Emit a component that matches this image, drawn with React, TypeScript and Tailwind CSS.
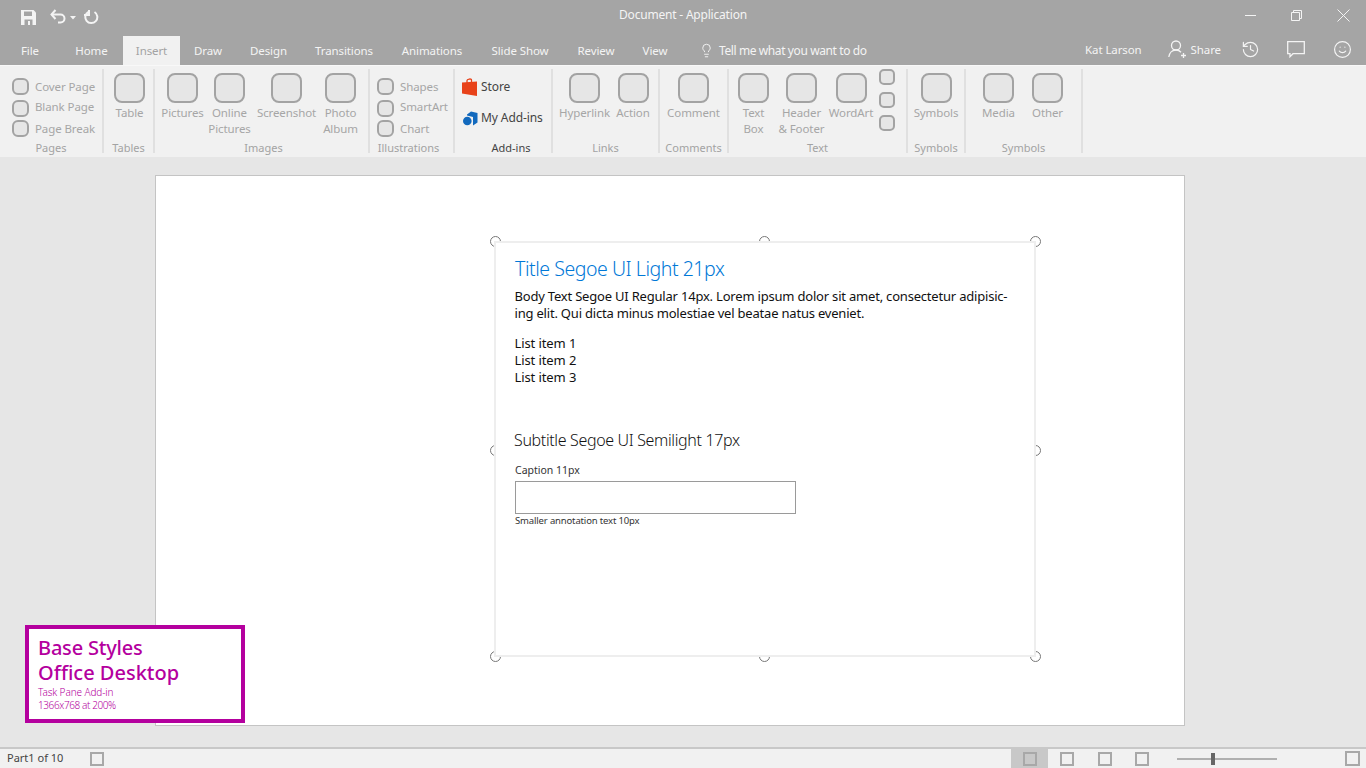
import React from "react";
import { History, Lightbulb, Smile } from "lucide-react";

const font = "font-['Noto_Sans','Open_Sans',sans-serif]";

const tabs = [
    { label: "File", w: "w-[60px]" },
    { label: "Home", w: "w-[63px]" },
    { label: "Insert", w: "w-[57px]", active: true },
    { label: "Draw", w: "w-[56px]" },
    { label: "Design", w: "w-[65px]" },
    { label: "Transitions", w: "w-[86px]" },
    { label: "Animations", w: "w-[90px]" },
    { label: "Slide Show", w: "w-[86px]" },
    { label: "Review", w: "w-[66px]" },
    { label: "View", w: "w-[52px]" },
];

const BigTool = ({ label, second, className }: { label: string; second?: string; className: string }) => (
    <div className={`flex flex-col items-center pt-[4px] shrink-0 ${className}`}>
        <div className="w-[31px] h-[30px] rounded-[8px] border-2 border-[#a3a3a3] bg-[#e6e6e6]" />
        <div className="mt-[2px] text-[11.5px] leading-[16px] tracking-[-0.1px] text-[#a6a6a6] text-center whitespace-nowrap">
            {label}
            {second && <div>{second}</div>}
        </div>
    </div>
);

const SmallTool = ({ label, className, textClass }: { label: string; className?: string; textClass?: string }) => (
    <div className={`flex items-center h-[17px] ${className || ""}`}>
        <div className="w-[17px] h-[17px] rounded-[6px] border-2 border-[#a3a3a3] bg-[#e6e6e6]" />
        <div className={`ml-[6px] text-[11.5px] tracking-[-0.1px] text-[#a6a6a6] whitespace-nowrap ${textClass || ""}`}>
            {label}
        </div>
    </div>
);

const Group = ({
    label,
    className,
    labelClass,
    children,
    dark,
}: {
    label: string;
    className: string;
    labelClass?: string;
    children: React.ReactNode;
    dark?: boolean;
}) => (
    <div className={`relative flex flex-col h-[84px] border-r-2 border-[#e0e0e0] shrink-0 ${className}`}>
        <div className="flex h-[72px] shrink-0">{children}</div>
        <div
            className={`shrink-0 text-center text-[11px] leading-[14px] whitespace-nowrap ${dark ? "text-[#444444]" : "text-[#a3a3a3]"} ${labelClass || ""}`}
        >
            {label}
        </div>
    </div>
);

const Square = ({ className }: { className?: string }) => (
    <div className={`w-[14px] h-[14px] border-2 border-[#a8a8a8] ${className || ""}`} />
);

const Handle = ({ className }: { className: string }) => (
    <div className={`absolute w-[11px] h-[11px] rounded-full border-[1.5px] border-[#777777] bg-white ${className}`} />
);

const App = () => {
    return (
        <div className={`relative w-[1366px] h-[768px] overflow-hidden flex flex-col bg-[#e6e6e6] ${font}`}>
            {/* title bar */}
            <div className="h-[65px] bg-[#a5a5a5] text-[#f4f4f4] shrink-0">
                <div className="relative h-[36px] flex items-center">
                    <svg className="ml-[21px] -mt-[2px]" width="15" height="15" viewBox="0 0 15 15">
                        <path fill="#f4f4f4" d="M0 0h12.5L15 2.5V15H0z" />
                        <path fill="#a5a5a5" d="M3 1.5h8v4.5H3zM3.5 9.5h8V15h-8z" />
                        <path fill="#f4f4f4" d="M7 11h2v4H7z" />
                    </svg>
                    <svg className="ml-[14px] -mt-[2px]" width="16" height="16" viewBox="0 0 16 16" fill="none">
                        <path d="M1.500 5.500h9a4 4 0 0 1 0 8H8" stroke="#f4f4f4" strokeWidth="2" />
                        <path d="M5.500 1 1.500 5.500 5.500 10" stroke="#f4f4f4" strokeWidth="2" />
                    </svg>
                    <svg className="ml-[4px]" width="7" height="4" viewBox="0 0 7 4">
                        <path fill="#f4f4f4" d="M0 0h6L3 3.500z" />
                    </svg>
                    <svg className="ml-[7px] -mt-[2px]" width="15" height="15" viewBox="0 0 15 15" fill="none">
                        <path d="M4.500 1.800A6 6 0 1 0 10.500 2" stroke="#f4f4f4" strokeWidth="2" />
                        <path d="M5 0v5H0" stroke="#f4f4f4" strokeWidth="2" />
                    </svg>
                    <div className="absolute left-0 right-0 top-[6px] text-center text-[12px] leading-[18px] tracking-[-0.2px]">
                        Document - Application
                    </div>
                    <div className="ml-auto flex items-center mb-[5px]">
                        <svg width="11" height="11" viewBox="0 0 11 11" className="mr-[35px]">
                            <path d="M0 5.500h11" stroke="#f4f4f4" strokeWidth="1" />
                        </svg>
                        <svg width="11" height="11" viewBox="0 0 11 11" fill="none" className="mr-[35px]">
                            <path d="M.5 2.500h8v8h-8z" stroke="#f4f4f4" />
                            <path d="M2.500 2V.5h8v8H9" stroke="#f4f4f4" />
                        </svg>
                        <svg width="13" height="13" viewBox="0 0 13 13" className="mr-[16px]">
                            <path d="M.5.5l12 12M12.500.5l-12 12" stroke="#f4f4f4" />
                        </svg>
                    </div>
                </div>
                <div className="h-[29px] flex text-[11.5px] tracking-[-0.1px]">
                    {tabs.map((t) => (
                        <div
                            key={t.label}
                            className={`${t.w} shrink-0 flex items-center justify-center ${t.active ? "bg-[#f1f1f1] text-[#a3a3a3]" : ""}`}
                        >
                            {t.label}
                        </div>
                    ))}
                    <div className="ml-[18px] flex items-center gap-[5px] text-[12px] tracking-[-0.4px]">
                        <Lightbulb size={15} strokeWidth={1.5} />
                        <span>Tell me what you want to do</span>
                    </div>
                    <div className="ml-auto flex items-center pb-[2px]">
                        <span className="text-[11.5px] mr-[26px] tracking-[-0.1px]">Kat Larson</span>
                        <svg width="19" height="19" viewBox="0 0 19 19" fill="none" className="mr-[4px]">
                            <circle cx="8" cy="5.500" r="4.500" stroke="#f4f4f4" strokeWidth="1.300" />
                            <path d="M.8 17c.5-4 3.400-7 7.200-7 2 0 3.700.8 5 2.200" stroke="#f4f4f4" strokeWidth="1.300" />
                            <path d="M15.500 13v5M13 15.500h5" stroke="#f4f4f4" strokeWidth="1.300" />
                        </svg>
                        <span className="text-[11.5px] mr-[20px]">Share</span>
                        <History size={19} strokeWidth={1.5} className="mr-[27px]" />
                        <svg width="18" height="17" viewBox="0 0 18 17" fill="none" className="mr-[28px]">
                            <path d="M.7.7h16.600v12H6l-3 3v-3H.7z" stroke="#f4f4f4" strokeWidth="1.300" />
                        </svg>
                        <Smile size={19} strokeWidth={1.5} className="mr-[14px]" />
                    </div>
                </div>
            </div>

            {/* ribbon */}
            <div className="h-[92px] bg-[#f1f1f1] shrink-0 flex pt-[3px] border-t border-[#f8f8f8]">
                <Group label="Pages" className="w-[104px]">
                    <div className="pl-[12px] pt-[9px] flex flex-col gap-[4px]">
                        <SmallTool label="Cover Page" />
                        <SmallTool label="Blank Page" className="mt-[1px]" textClass="-mt-[3px]" />
                        <SmallTool label="Page Break" className="-mt-[1px]" />
                    </div>
                </Group>
                <Group label="Tables" className="w-[51px]">
                    <BigTool label="Table" className="w-[51px]" />
                </Group>
                <Group label="Images" className="w-[215px]" labelClass="pl-[4px]">
                    <BigTool label="Pictures" className="w-[47px] ml-[4px]" />
                    <BigTool label="Online" second="Pictures" className="w-[47px]" />
                    <BigTool label="Screenshot" className="w-[67px]" />
                    <BigTool label="Photo" second="Album" className="w-[41px]" />
                </Group>
                <Group label="Illustrations" className="w-[85px]" labelClass="pr-[6px]">
                    <div className="pl-[7px] pt-[9px] flex flex-col gap-[4px]">
                        <SmallTool label="Shapes" />
                        <SmallTool label="SmartArt" className="mt-[1px]" textClass="-mt-[3px]" />
                        <SmallTool label="Chart" className="-mt-[1px]" />
                    </div>
                </Group>
                <Group label="Add-ins" className="w-[98px]" labelClass="pl-[16px]" dark>
                    <div className="pl-[7px] pt-[9px] text-[12px] text-[#444444] tracking-[-0.1px]">
                        <div className="flex items-center h-[18px]">
                            <svg width="16" height="18" viewBox="0 0 16 18">
                                <path fill="#e8421a" d="M0 4.500 15 3.500V18L0 15.500z" />
                                <path d="M5 5V2.500C5 1 9.500 .3 9.500 2V5" fill="none" stroke="#e8421a" strokeWidth="1.300" />
                            </svg>
                            <span className="ml-[3px]">Store</span>
                        </div>
                        <div className="flex items-center h-[18px] mt-[13px]">
                            <svg width="15" height="15" viewBox="0 0 15 15" className="ml-[1px]">
                                <path fill="#1269bd" d="M4 3.500 8 0.500 14.500 2V11.500L10 14.500V6L4 4.500z" />
                                <circle cx="4.300" cy="10" r="4.300" fill="#1269bd" />
                            </svg>
                            <span className="ml-[3px]">My Add-ins</span>
                        </div>
                    </div>
                </Group>
                <Group label="Links" className="w-[107px]">
                    <BigTool label="Hyperlink" className="w-[61px] ml-[1px]" />
                    <BigTool label="Action" className="w-[36px]" />
                </Group>
                <Group label="Comments" className="w-[69px]">
                    <BigTool label="Comment" className="w-[67px]" />
                </Group>
                <Group label="Text" className="w-[179px]">
                    <BigTool label="Text" second="Box" className="w-[49px]" />
                    <BigTool label="Header" second="& Footer" className="w-[47px]" />
                    <BigTool label="WordArt" className="w-[50px] ml-[1px]" />
                    <div className="flex flex-col gap-[7px] ml-[3px]">
                        <div className="w-[16px] h-[16px] rounded-[5px] border-2 border-[#a3a3a3] bg-[#e6e6e6]" />
                        <div className="w-[16px] h-[16px] rounded-[5px] border-2 border-[#a3a3a3] bg-[#e6e6e6]" />
                        <div className="w-[16px] h-[16px] rounded-[5px] border-2 border-[#a3a3a3] bg-[#e6e6e6]" />
                    </div>
                </Group>
                <Group label="Symbols" className="w-[58px]">
                    <BigTool label="Symbols" className="w-[56px]" />
                </Group>
                <Group label="Symbols" className="w-[117px]">
                    <BigTool label="Media" className="w-[65px]" />
                    <BigTool label="Other" className="w-[33px]" />
                </Group>
            </div>

            {/* canvas */}
            <div className="flex-1 pt-[18px] pl-[155px]">
                <div className="relative w-[1030px] h-[551px] bg-white border border-[#c4c4c4] pl-[338px] pt-[65px]">
                    <div className="relative w-[542px] h-[416px]">
                        <Handle className="-left-[4px] -top-[5px]" />
                        <Handle className="left-[265px] -top-[5px]" />
                        <Handle className="-right-[5px] -top-[5px]" />
                        <Handle className="-left-[4px] top-[204px]" />
                        <Handle className="-right-[5px] top-[204px]" />
                        <Handle className="-left-[4px] -bottom-[5px]" />
                        <Handle className="left-[265px] -bottom-[5px]" />
                        <Handle className="-right-[5px] -bottom-[5px]" />
                        <div className="relative h-full bg-white border-2 border-[#eeeeee] pl-[19px] pt-[12px] text-[#111111]">
                            <div className="text-[19.5px] leading-[28px] tracking-[-0.45px] font-light text-[#0078d7]">
                                Title Segoe UI Light 21px
                            </div>
                            <div className="mt-[5px] -ml-[0.5px] text-[13px] leading-[17px] tracking-[-0.2px] whitespace-nowrap">
                                Body Text Segoe UI Regular 14px. Lorem ipsum dolor sit amet, consectetur adipisic-
                                <br />
                                ing elit. Qui dicta minus molestiae vel beatae natus eveniet.
                            </div>
                            <div className="mt-[13px] -ml-[0.5px] text-[13px] leading-[17px] tracking-[-0.1px]">
                                <div>List item 1</div>
                                <div>List item 2</div>
                                <div>List item 3</div>
                            </div>
                            <div className="mt-[42px] -ml-[1px] text-[16px] leading-[24px] tracking-[-0.35px] font-light">
                                Subtitle Segoe UI Semilight 17px
                            </div>
                            <div className="mt-[11px] text-[10.5px] leading-[15px] text-[#333333]">Caption 11px</div>
                            <div className="mt-[3px] w-[281px] h-[33px] border border-[#9a9a9a]" />
                            <div className="text-[9.5px] leading-[13px] tracking-[-0.15px] text-[#333333]">
                                Smaller annotation text 10px
                            </div>
                        </div>
                    </div>
                </div>
            </div>

            {/* status bar */}
            <div className="h-[21px] shrink-0 bg-[#f1f1f1] border-t-2 border-[#c8c8c8] flex items-center text-[11px] text-[#444444]">
                <span className="ml-[7px] w-[83px]">Part1 of 10</span>
                <Square />
                <div className="ml-auto flex items-center h-full">
                    <div className="w-[37px] h-full bg-[#c8c8c8] flex items-center justify-center">
                        <Square className="border-[#9a9a9a]" />
                    </div>
                    <Square className="ml-[12px]" />
                    <Square className="ml-[24px]" />
                    <Square className="ml-[23px]" />
                    <div className="relative ml-[28px] w-[100px] h-[2px] bg-[#b0b0b0]">
                        <div className="absolute left-[34px] -top-[5px] w-[4px] h-[12px] bg-[#666666]" />
                    </div>
                    <Square className="ml-[68px] mr-[6px] w-[15px] h-[15px]" />
                </div>
            </div>

            {/* style label */}
            <div className="absolute left-[25px] top-[625px] w-[220px] h-[98px] bg-white border-4 border-[#b4009e] pl-[9px] pt-[6px] text-[#b4009e]">
                <div className="text-[20px] leading-[25px] tracking-[-0.2px] font-medium">Base Styles</div>
                <div className="text-[20px] leading-[25px] font-medium">Office Desktop</div>
                <div className="mt-[1px] text-[10px] leading-[13px] tracking-[-0.1px] font-light">Task Pane Add-in</div>
                <div className="text-[10px] leading-[13px] tracking-[-0.4px] font-light">1366x768 at 200%</div>
            </div>
        </div>
    );
};

export default App;
